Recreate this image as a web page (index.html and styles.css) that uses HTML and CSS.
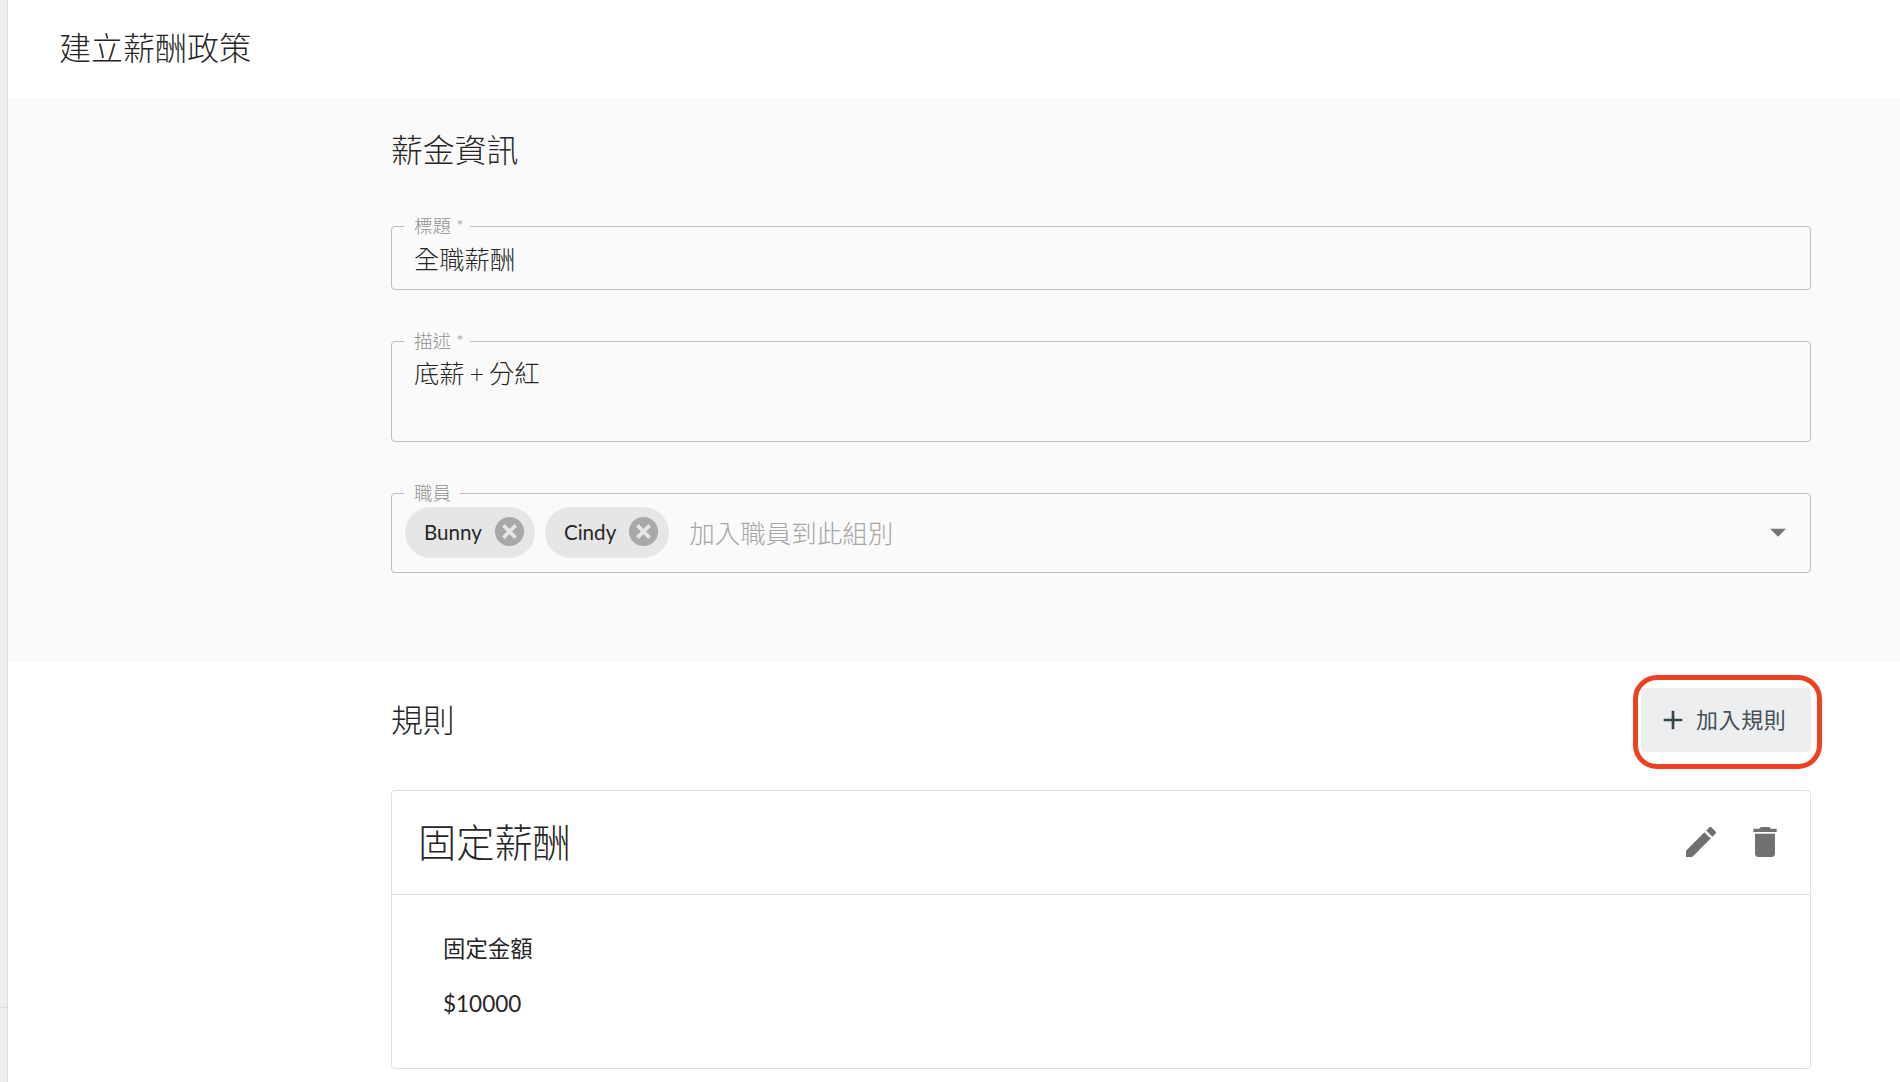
FILE: index.html
```html
<!DOCTYPE html>
<html lang="zh-Hant">
<head>
<meta charset="utf-8">
<title>建立薪酬政策</title>
<link rel="stylesheet" href="styles.css">
</head>
<body>
<div class="app">
  <aside class="rail"><div class="rail-line"></div></aside>
  <main class="main">
    <header class="page-head"><h1 class="page-title">建立薪酬政策</h1></header>
    <section class="info">
      <h2 class="section-title">薪金資訊</h2>
      <fieldset class="field field-title">
        <legend class="legend">標題 *</legend>
        <div class="value">全職薪酬</div>
      </fieldset>
      <fieldset class="field field-desc">
        <legend class="legend">描述 *</legend>
        <div class="value">底薪 + 分紅</div>
      </fieldset>
      <fieldset class="field field-staff">
        <legend class="legend">職員</legend>
        <div class="staff-row">
          <span class="chip"><span class="chip-label">Bunny</span>
            <svg class="chip-x" viewBox="0 0 24 24"><circle class="chip-x-disc" cx="12" cy="12" r="10"/><path class="chip-x-cross" d="M7.8 7.8l8.4 8.4M16.2 7.8l-8.4 8.4"/></svg>
          </span>
          <span class="chip"><span class="chip-label">Cindy</span>
            <svg class="chip-x" viewBox="0 0 24 24"><circle class="chip-x-disc" cx="12" cy="12" r="10"/><path class="chip-x-cross" d="M7.8 7.8l8.4 8.4M16.2 7.8l-8.4 8.4"/></svg>
          </span>
          <span class="placeholder">加入職員到此組別</span>
          <svg class="caret" viewBox="0 0 24 24"><path d="M7 10l5 5 5-5z"/></svg>
        </div>
      </fieldset>
    </section>
    <section class="rules">
      <div class="rules-head">
        <h2 class="section-title">規則</h2>
        <div class="btn-wrap">
          <button class="add-btn" type="button">
            <svg class="plus" viewBox="0 0 24 24"><path d="M19 13h-6v6h-2v-6H5v-2h6V5h2v6h6v2z"/></svg>
            <span class="add-label">加入規則</span>
          </button>
          <span class="ring"></span>
        </div>
      </div>
      <article class="card">
        <div class="card-head">
          <h3 class="card-title">固定薪酬</h3>
          <div class="card-actions">
            <svg class="action" viewBox="0 0 24 24"><path d="M3 17.25V21h3.75L17.81 9.94l-3.75-3.75L3 17.25zM20.71 7.04c.39-.39.39-1.02 0-1.41l-2.34-2.34c-.39-.39-1.02-.39-1.41 0l-1.83 1.83 3.75 3.75 1.83-1.83z"/></svg>
            <svg class="action" viewBox="0 0 24 24"><path d="M6 19c0 1.1.9 2 2 2h8c1.1 0 2-.9 2-2V7H6v12zM19 4h-3.5l-1-1h-5l-1 1H5v2h14V4z"/></svg>
          </div>
        </div>
        <div class="card-body">
          <div class="amount-label">固定金額</div>
          <div class="amount">$10000</div>
        </div>
      </article>
    </section>
  </main>
</div>
</body>
</html>
```
FILE: styles.css
```css
* { box-sizing: border-box; }
html, body { margin: 0; height: 100%; }
body {
  font-family: "Lato", "Noto Sans CJK TC", sans-serif;
  color: #262626;
  background: #fff;
  overflow: hidden;
}
.app { display: flex; height: 1082px; overflow: hidden; }
.rail {
  width: 8px;
  flex: none;
  background: #eeeeee;
  border-right: 1px solid #dadada;
  padding-top: 1007px;
}
.rail-line { height: 1px; background: #dcdcdc; }
.main { flex: 1; min-width: 0; }

.page-head { height: 98px; padding-left: 51px; display: flex; align-items: center; }
.page-title { margin: 0 0 3px; font-size: 32px; line-height: 40px; font-weight: 300; }

.info {
  background: #fafafa;
  height: 564px;
  padding: 32px 89px 0 383px;
}
.section-title { margin: 0; font-size: 31.8px; line-height: 40px; font-weight: 300; }

.field {
  margin: 0;
  min-width: 0;
  padding: 0 22px;
  border: 1px solid #bdbdbd;
  border-radius: 4px;
}
.legend {
  margin-left: -10px;
  padding: 0 6px 0 10px;
  font-size: 18.5px;
  line-height: 18px;
  font-weight: 300;
  color: #8f8f8f;
}
.field-title { margin-top: 47px; height: 73px; }
.field-desc { margin-top: 42px; height: 110px; }
.field-staff { margin-top: 42px; height: 89px; padding-left: 12px; }
.field-staff .legend { margin-left: 0; padding-right: 9px; }
.value { font-size: 25.3px; line-height: 36px; font-weight: 300; padding-top: 6px; }
.field-desc .value { padding-top: 5px; word-spacing: -2px; }

.staff-row { display: flex; align-items: center; height: 53px; margin: 3px 0 0 1px; }
.chip {
  display: inline-flex;
  align-items: center;
  height: 51px;
  padding: 0 8px 2px 19px;
  margin: 2px 10px 0 0;
  border-radius: 26px;
  background: #e6e6e6;
  font-size: 20.6px;
}
.chip-label { margin-right: 10px; }
.chip-x { width: 35px; height: 35px; }
.chip-x-disc { fill: #a8a8a8; }
.chip-x-cross { fill: none; stroke: #e6e6e6; stroke-width: 2.5; }
.placeholder { margin-left: 10px; font-size: 25.5px; font-weight: 300; color: #a5a5a5; flex: 1; }
.caret { width: 38px; height: 38px; fill: #757575; margin-right: -9px; }

.rules { padding: 26px 89px 0 383px; }
.rules-head { display: flex; justify-content: space-between; align-items: center; margin-bottom: 38px; }
.btn-wrap { position: relative; }
.add-btn {
  display: flex;
  align-items: center;
  width: 170px;
  height: 64px;
  padding: 0 0 0 16px;
  border: 0;
  border-radius: 4px;
  background: #edeef0;
  color: #455159;
  font: 400 22px "Lato", "Noto Sans CJK TC", sans-serif;
  letter-spacing: .6px;
}
.plus { width: 32px; height: 32px; fill: #37474f; margin-right: 7px; flex: none; }
.add-label { padding-bottom: 4px; }
.ring {
  position: absolute;
  left: -8px;
  top: -13px;
  width: 189px;
  height: 94px;
  border: 5px solid #ee4124;
  border-radius: 24px;
}

.card { height: 279px; border: 1px solid #e0e0e0; border-radius: 4px; background: #fff; }
.card-head {
  display: flex;
  justify-content: space-between;
  align-items: center;
  height: 104px;
  padding: 0 25px 0 26px;
  border-bottom: 1px solid #e0e0e0;
}
.card-title { margin: 0 0 1px; font-size: 38.2px; line-height: 46px; font-weight: 300; }
.card-actions { display: flex; gap: 24px; margin-bottom: 1px; }
.action { width: 40px; height: 40px; fill: #707070; display: block; }
.card-body { padding: 40px 0 0 51px; }
.amount-label { font-size: 22.4px; line-height: 28px; font-weight: 400; }
.amount { margin-top: 27px; font-size: 22.5px; line-height: 28px; }
```
